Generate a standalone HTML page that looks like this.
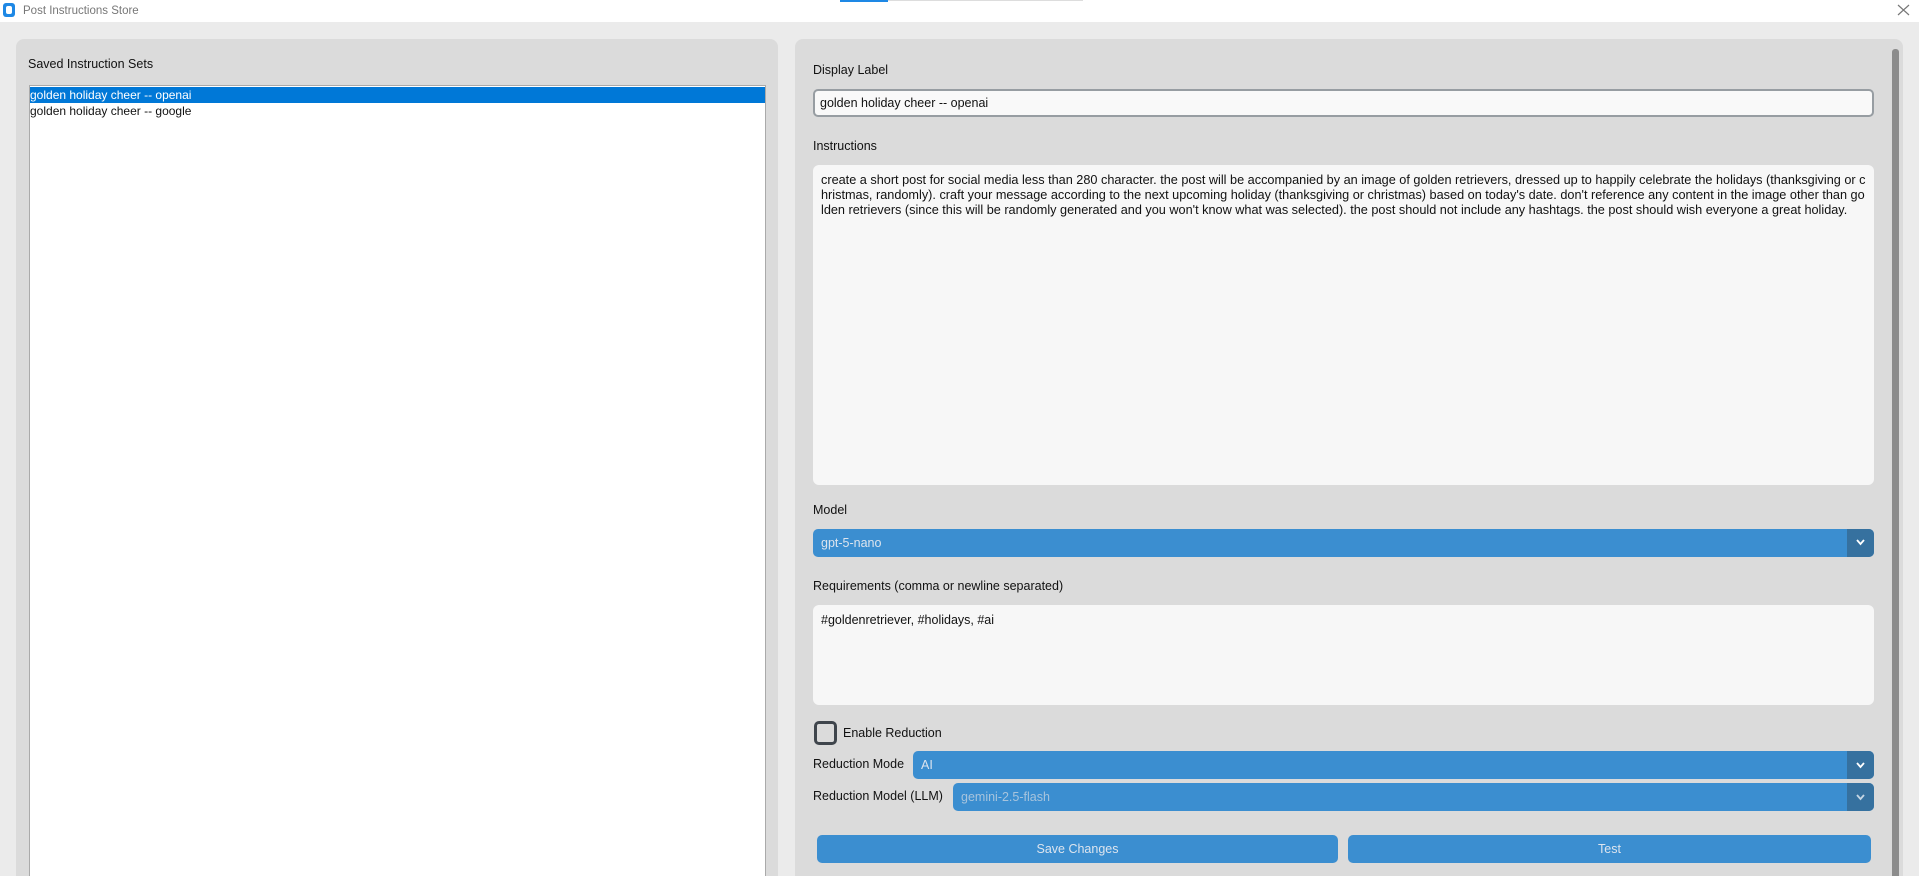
<!DOCTYPE html>
<html><head><meta charset="utf-8"><style>
*{margin:0;padding:0;box-sizing:border-box}
html,body{width:1919px;height:876px;overflow:hidden}
body{background:#ebebeb;font-family:"Liberation Sans",sans-serif;position:relative;color:#111}
.a{position:absolute}
.t{font-size:12.5px;white-space:nowrap;line-height:15px}
.dd{position:absolute;background:#3b8ed0;border-radius:5px;overflow:hidden}
.dd .arr{position:absolute;right:0;top:0;bottom:0;width:27px;background:#36719f}
.dd .txt{position:absolute;left:8px;top:7px;color:#dce4ee;font-size:12.5px}
.btn{position:absolute;background:#3b8ed0;border-radius:5px;color:#dce4ee;font-size:12.5px;text-align:center;line-height:28px}
</style></head><body>
<div class="a" style="left:0;top:0;width:1919px;height:22px;background:#fff"></div>
<div class="a" style="left:3px;top:3px;width:12px;height:14px;background:#1e88e5;border-radius:3px"></div>
<div class="a" style="left:6px;top:6px;width:6px;height:8px;background:#fff;border-radius:2px"></div>
<div class="a t" style="left:23px;top:4px;color:#777;font-size:11.5px">Post Instructions Store</div>
<div class="a" style="left:840px;top:0;width:48px;height:2px;background:#1e88e5"></div>
<div class="a" style="left:888px;top:0;width:195px;height:1px;background:#ddd"></div>
<svg class="a" style="left:1897px;top:4px" width="13" height="12"><path d="M1 1L12 11M12 1L1 11" stroke="#777" stroke-width="1.2"/></svg>

<div class="a" style="left:16px;top:39px;width:762px;height:837px;background:#dbdbdb;border-radius:8px 8px 0 0"></div>
<div class="a t" style="left:28px;top:57px;font-size:12.5px">Saved Instruction Sets</div>
<div class="a" style="left:29px;top:85px;width:737px;height:791px;background:#fff;border:1px solid #aaa;border-bottom:none"></div>
<div class="a" style="left:30px;top:87px;width:735px;height:16px;background:#0078d7"></div>
<div class="a t" style="left:30px;top:88px;color:#fff;font-size:12px">golden holiday cheer -- openai</div>
<div class="a t" style="left:30px;top:104px;font-size:12px">golden holiday cheer -- google</div>

<div class="a" style="left:795px;top:39px;width:1108px;height:837px;background:#dbdbdb;border-radius:8px 8px 0 0"></div>
<div class="a" style="left:1892px;top:49px;width:7px;height:827px;background:#8c8c8c;border-radius:3px 3px 0 0"></div>

<div class="a t" style="left:813px;top:63px">Display Label</div>
<div class="a" style="left:813px;top:89px;width:1061px;height:28px;background:#f9f9f9;border:2px solid #979da2;border-radius:5px"></div>
<div class="a t" style="left:820px;top:96px">golden holiday cheer -- openai</div>

<div class="a t" style="left:813px;top:139px">Instructions</div>
<div class="a" style="left:813px;top:165px;width:1061px;height:320px;background:#f7f7f7;border-radius:6px"></div>
<div class="a t" style="left:821px;top:173px;font-size:12.7px">create a short post for social media less than 280 character. the post will be accompanied by an image of golden retrievers, dressed up to happily celebrate the holidays (thanksgiving or c</div>
<div class="a t" style="left:821px;top:188px;font-size:12.7px">hristmas, randomly). craft your message according to the next upcoming holiday (thanksgiving or christmas) based on today's date. don't reference any content in the image other than go</div>
<div class="a t" style="left:821px;top:203px;font-size:12.7px">lden retrievers (since this will be randomly generated and you won't know what was selected). the post should not include any hashtags. the post should wish everyone a great holiday.</div>

<div class="a t" style="left:813px;top:503px">Model</div>
<div class="dd" style="left:813px;top:529px;width:1061px;height:28px"><div class="arr"></div><div class="txt">gpt-5-nano</div></div>
<svg class="a" style="left:1856px;top:539px" width="9" height="7"><path d="M1 1L4.5 5L8 1" stroke="#fff" stroke-width="1.8" fill="none"/></svg>

<div class="a t" style="left:813px;top:579px">Requirements (comma or newline separated)</div>
<div class="a" style="left:813px;top:605px;width:1061px;height:100px;background:#f7f7f7;border-radius:6px"></div>
<div class="a t" style="left:821px;top:613px">#goldenretriever, #holidays, #ai</div>

<div class="a" style="left:814px;top:721px;width:23px;height:24px;border:3px solid #3f454c;border-radius:5px"></div>
<div class="a t" style="left:843px;top:726px">Enable Reduction</div>

<div class="a t" style="left:813px;top:757px">Reduction Mode</div>
<div class="dd" style="left:913px;top:751px;width:961px;height:28px"><div class="arr"></div><div class="txt">AI</div></div>
<svg class="a" style="left:1856px;top:762px" width="9" height="7"><path d="M1 1L4.5 5L8 1" stroke="#fff" stroke-width="1.8" fill="none"/></svg>

<div class="a t" style="left:813px;top:789px">Reduction Model (LLM)</div>
<div class="dd" style="left:953px;top:783px;width:921px;height:28px"><div class="arr"></div><div class="txt" style="color:#a7c4dd">gemini-2.5-flash</div></div>
<svg class="a" style="left:1856px;top:794px" width="9" height="7"><path d="M1 1L4.5 5L8 1" stroke="#c6d6e4" stroke-width="1.8" fill="none"/></svg>

<div class="btn" style="left:817px;top:835px;width:521px;height:28px">Save Changes</div>
<div class="btn" style="left:1348px;top:835px;width:523px;height:28px">Test</div>
</body></html>
